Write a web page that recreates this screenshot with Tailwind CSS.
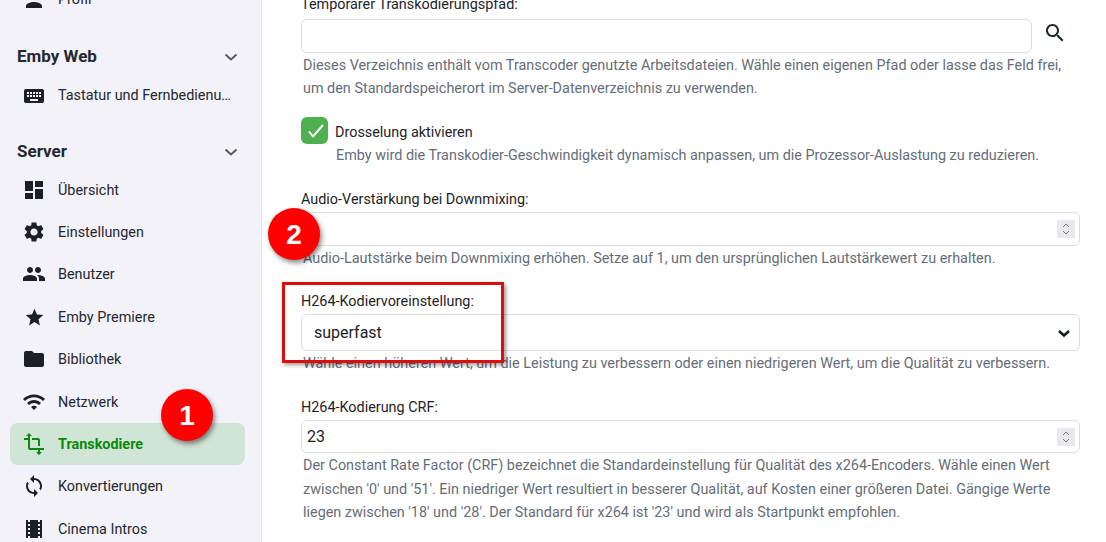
<!DOCTYPE html>
<html lang="de">
<head>
  <meta charset="UTF-8" />
  <meta name="viewport" content="width=device-width, initial-scale=1.0" />
  <title>Transkodierung</title>
  <script src="https://cdn.jsdelivr.net/npm/@tailwindcss/browser@4"></script>
</head>
<body class="bg-white font-['Roboto',sans-serif] text-[#1f2328]">
<div class="relative flex h-[542px] w-[1106px] overflow-hidden">

  <!-- sidebar -->
  <aside class="w-[262px] shrink-0 border-r border-[#e3e3e8] bg-[#f3f2f9] pl-[10px] pr-[16px] text-[14.4px] text-[#25282d]">
    <div class="-mt-[21px] flex h-[42px] items-center gap-[12px] pl-[12px]">
      <svg class="size-[24px] fill-[#1c1f24]" viewBox="0 0 24 24"><path d="M12 12c2.210 0 4-1.790 4-4s-1.790-4-4-4-4 1.790-4 4 1.790 4 4 4zm0 2c-2.670 0-8 1.340-8 4v2h16v-2c0-2.660-5.330-4-8-4z"/></svg>
      <span>Profil</span>
    </div>

    <div class="mt-[15px] flex h-[42px] items-center justify-between pl-[7px] pr-[4px]">
      <span class="text-[17px] font-bold">Emby Web</span>
      <svg class="size-[20px] fill-none stroke-[#555a61] stroke-2" viewBox="0 0 20 20"><path d="M4.500 7.500 10 12.500l5.500-5"/></svg>
    </div>
    <div class="-mt-[3px] flex h-[42px] items-center gap-[12px] pl-[12px] pr-[12px]">
      <svg class="size-[24px] shrink-0 fill-[#1c1f24]" viewBox="0 0 24 24"><path d="M20 5H4c-1.100 0-1.990.9-1.990 2L2 17c0 1.100.9 2 2 2h16c1.100 0 2-.9 2-2V7c0-1.100-.9-2-2-2zm-9 3h2v2h-2V8zm0 3h2v2h-2v-2zM8 8h2v2H8V8zm0 3h2v2H8v-2zm-1 2H5v-2h2v2zm0-3H5V8h2v2zm9 7H8v-2h8v2zm0-4h-2v-2h2v2zm0-3h-2V8h2v2zm3 3h-2v-2h2v2zm0-3h-2V8h2v2z"/></svg>
      <span class="truncate">Tastatur und Fernbedienung</span>
    </div>

    <div class="mt-[14px] flex h-[42px] items-center justify-between pl-[7px] pr-[4px]">
      <span class="text-[17px] font-bold">Server</span>
      <svg class="size-[20px] fill-none stroke-[#555a61] stroke-2" viewBox="0 0 20 20"><path d="M4.500 7.500 10 12.500l5.500-5"/></svg>
    </div>

    <nav class="-mt-[4px] [&_span]:mt-[2px]">
      <a class="flex h-[42px] items-center gap-[12px] pl-[12px]">
        <svg class="size-[24px] fill-[#1c1f24]" viewBox="0 0 24 24"><path d="M3 13h8V3H3v10zm0 8h8v-6H3v6zm10 0h8V11h-8v10zm0-18v6h8V3h-8z"/></svg>
        <span>Übersicht</span>
      </a>
      <a class="flex h-[42px] items-center gap-[12px] pl-[12px]">
        <svg class="size-[24px] fill-[#1c1f24]" viewBox="0 0 24 24"><path d="M19.140 12.940c.04-.3.06-.61.06-.94 0-.32-.02-.64-.07-.94l2.030-1.580c.18-.14.23-.41.12-.61l-1.920-3.320c-.12-.22-.37-.29-.59-.22l-2.390.96c-.5-.38-1.030-.7-1.620-.94l-.36-2.540c-.04-.24-.24-.41-.48-.41h-3.840c-.24 0-.43.17-.47.41l-.36 2.540c-.59.24-1.130.57-1.620.94l-2.390-.96c-.22-.08-.47 0-.59.22L2.740 8.870c-.12.21-.08.47.12.61l2.030 1.580c-.05.3-.09.63-.09.94s.02.64.07.94l-2.030 1.580c-.18.14-.23.41-.12.61l1.920 3.320c.12.22.37.29.59.22l2.390-.96c.5.38 1.030.7 1.620.94l.36 2.540c.05.24.24.41.48.41h3.840c.24 0 .44-.17.47-.41l.36-2.540c.59-.24 1.130-.56 1.620-.94l2.390.96c.22.08.47 0 .59-.22l1.920-3.320c.12-.22.07-.47-.12-.61l-2.010-1.580zM12 15.600c-1.980 0-3.600-1.620-3.600-3.600s1.620-3.600 3.600-3.600 3.600 1.620 3.600 3.600-1.620 3.600-3.600 3.600z"/></svg>
        <span>Einstellungen</span>
      </a>
      <a class="flex h-[42px] items-center gap-[12px] pl-[12px]">
        <svg class="size-[24px] fill-[#1c1f24]" viewBox="0 0 24 24"><path d="M16 11c1.660 0 2.990-1.340 2.990-3S17.660 5 16 5c-1.660 0-3 1.340-3 3s1.340 3 3 3zm-8 0c1.660 0 2.990-1.340 2.990-3S9.660 5 8 5C6.340 5 5 6.340 5 8s1.340 3 3 3zm0 2c-2.330 0-7 1.170-7 3.500V19h14v-2.500c0-2.330-4.670-3.500-7-3.500zm8 0c-.29 0-.62.02-.97.05 1.160.84 1.970 1.970 1.970 3.450V19h6v-2.500c0-2.330-4.670-3.500-7-3.500z"/></svg>
        <span>Benutzer</span>
      </a>
      <a class="mt-[1px] flex h-[42px] items-center gap-[12px] pl-[12px]">
        <svg class="mx-[1.500px] size-[21px] fill-[#1c1f24]" viewBox="0 0 24 24"><path d="M12 17.270L18.180 21l-1.640-7.030L22 9.240l-7.190-.61L12 2 9.190 8.630 2 9.240l5.460 4.730L5.820 21z"/></svg>
        <span>Emby Premiere</span>
      </a>
      <a class="flex h-[42px] items-center gap-[12px] pl-[12px]">
        <svg class="size-[24px] fill-[#1c1f24]" viewBox="0 0 24 24"><path d="M10 4H4c-1.100 0-1.990.9-1.990 2L2 18c0 1.100.9 2 2 2h16c1.100 0 2-.9 2-2V8c0-1.100-.9-2-2-2h-8l-2-2z"/></svg>
        <span>Bibliothek</span>
      </a>
      <a class="mt-[1px] flex h-[42px] items-center gap-[12px] pl-[12px]">
        <svg class="size-[24px] fill-[#1c1f24]" viewBox="0 0 24 24"><path d="M1 9l2 2c4.970-4.970 13.030-4.970 18 0l2-2C16.930 2.930 7.080 2.930 1 9zm8 8l3 3 3-3c-1.650-1.660-4.340-1.660-6 0zm-4-4l2 2c2.760-2.760 7.240-2.760 10 0l2-2C15.140 9.140 8.870 9.140 5 13z"/></svg>
        <span>Netzwerk</span>
      </a>
      <a class="flex h-[42px] items-center gap-[12px] rounded-lg bg-[#d1e5d6] pl-[12px] font-bold text-[#0a8a0a]">
        <svg class="size-[24px] fill-[#0a8a0a]" viewBox="0 0 24 24"><path d="M22 18v-2H8V4h2L7 1 4 4h2v2H2v2h4v8c0 1.100.9 2 2 2h8v2h-2l3 3 3-3h-2v-2h4zM10 8h6v6h2V8c0-1.100-.9-2-2-2h-6v2z"/></svg>
        <span>Transkodiere</span>
      </a>
      <a class="flex h-[42px] items-center gap-[12px] pl-[12px]">
        <svg class="size-[24px] fill-[#1c1f24]" viewBox="0 0 24 24"><path d="M12 4V1L8 5l4 4V6c3.310 0 6 2.690 6 6 0 1.010-.25 1.970-.7 2.800l1.460 1.460C19.540 15.030 20 13.570 20 12c0-4.420-3.580-8-8-8zm0 14c-3.310 0-6-2.690-6-6 0-1.010.25-1.970.7-2.800L5.240 7.740C4.460 8.970 4 10.430 4 12c0 4.420 3.580 8 8 8v3l4-4-4-4v3z"/></svg>
        <span>Konvertierungen</span>
      </a>
      <a class="mt-[1px] flex h-[42px] items-center gap-[12px] pl-[12px]">
        <svg class="size-[24px] fill-[#1c1f24]" viewBox="0 0 24 24"><path d="M18 3v2h-2V3H8v2H6V3H4v18h2v-2h2v2h8v-2h2v2h2V3h-2zM8 17H6v-2h2v2zm0-4H6v-2h2v2zm0-4H6V7h2v2zm10 8h-2v-2h2v2zm0-4h-2v-2h2v2zm0-4h-2V7h2v2z"/></svg>
        <span>Cinema Intros</span>
      </a>
    </nav>
  </aside>

  <!-- settings form -->
  <main class="flex-1 pl-[39px] text-[14.4px]">
    <label class="-mt-[4px] block h-[23px] leading-[18px]">Temporärer Transkodierungspfad:</label>
    <div class="flex items-start">
      <div class="h-[34px] w-[731px] rounded-md border border-[#dcdcdf]"></div>
      <svg class="ml-[11px] mt-[2px] size-[24px] fill-[#1c2530]" viewBox="0 0 24 24"><path d="M15.500 14h-.79l-.28-.27C15.410 12.590 16 11.110 16 9.500 16 5.910 13.090 3 9.500 3S3 5.910 3 9.500 5.910 16 9.500 16c1.610 0 3.090-.59 4.230-1.570l.27.28v.79l5 4.990L20.490 19l-4.990-5zm-6 0C7.010 14 5 11.990 5 9.500S7.010 5 9.500 5 14 7.010 14 9.500 11.990 14 9.500 14z"/></svg>
    </div>
    <p class="pl-[2px] pt-[1px] leading-[23px] text-[#666d78]">Dieses Verzeichnis enthält vom Transcoder genutzte Arbeitsdateien. Wähle einen eigenen Pfad oder lasse das Feld frei,<br />um den Standardspeicherort im Server-Datenverzeichnis zu verwenden.</p>

    <div class="mt-[17px] flex h-[27px] items-center gap-[7px]">
      <span class="flex size-[27px] items-center justify-center rounded-md bg-[#4fb04f]">
        <svg class="size-[22px] fill-none stroke-white stroke-2" viewBox="0 0 22 22"><path d="m5 11.500 4 5L19 5"/></svg>
      </span>
      <span class="mt-[4px]">Drosselung aktivieren</span>
    </div>
    <p class="mt-[1px] h-[22px] pl-[35px] leading-[22px] text-[#666d78]">Emby wird die Transkodier-Geschwindigkeit dynamisch anpassen, um die Prozessor-Auslastung zu reduzieren.</p>

    <label class="mt-[23px] block h-[22px] leading-[20px]">Audio-Verstärkung bei Downmixing:</label>
    <div class="flex h-[34px] w-[779px] items-center justify-end rounded-md border border-[#dcdcdf] pr-[4px]">
      <span class="flex h-[18px] w-[18px] flex-col items-center justify-center bg-[#e9e9ed]">
        <svg class="h-[14px] w-[10px] fill-none stroke-[#7a7a80]" viewBox="0 0 10 14"><path d="m2 5 3-3 3 3M2 9l3 3 3-3"/></svg>
      </span>
    </div>
    <p class="mt-[2px] h-[23px] pl-[2px] leading-[22px] text-[#666d78]">Audio-Lautstärke beim Downmixing erhöhen. Setze auf 1, um den ursprünglichen Lautstärkewert zu erhalten.</p>

    <label class="mt-[21px] block h-[22px] leading-[20px]">H264-Kodiervoreinstellung:</label>
    <div class="flex h-[37px] w-[779px] items-center justify-between rounded-md border border-[#dcdcdf] pl-[12px] pr-[9px] text-[16px]">
      <span>superfast</span>
      <svg class="size-[12px] fill-none stroke-[#141a22] stroke-[2.500]" viewBox="0 0 12 12"><path d="m1 4 5 4.500L11 4"/></svg>
    </div>
    <p class="mt-[2px] h-[23px] pl-[2px] leading-[22px] text-[#666d78]">Wähle einen höheren Wert, um die Leistung zu verbessern oder einen niedrigeren Wert, um die Qualität zu verbessern.</p>

    <label class="mt-[22px] block h-[22px] leading-[20px]">H264-Kodierung CRF:</label>
    <div class="flex h-[33px] w-[779px] items-center justify-between rounded-md border border-[#dcdcdf] pl-[5px] pr-[4px] text-[16px]">
      <span>23</span>
      <span class="flex h-[18px] w-[18px] flex-col items-center justify-center bg-[#e9e9ed]">
        <svg class="h-[14px] w-[10px] fill-none stroke-[#7a7a80]" viewBox="0 0 10 14"><path d="m2 5 3-3 3 3M2 9l3 3 3-3"/></svg>
      </span>
    </div>
    <p class="mt-[1px] w-[785px] pl-[2px] leading-[23.500px] text-[#666d78]">Der Constant Rate Factor (CRF) bezeichnet die Standardeinstellung für Qualität des x264-Encoders. Wähle einen Wert<br />zwischen '0' und '51'. Ein niedriger Wert resultiert in besserer Qualität, auf Kosten einer größeren Datei. Gängige Werte<br />liegen zwischen '18' und '28'. Der Standard für x264 ist '23' und wird als Startpunkt empfohlen.</p>
  </main>

  <!-- annotations -->
  <div class="absolute left-[282px] top-[282px] h-[81px] w-[222px] border-[3px] border-[#e00b0b] shadow-[2px_2px_4px_rgba(0,0,0,0.4)]"></div>
  <div class="absolute left-[268px] top-[208px] flex size-[52px] items-center justify-center rounded-full bg-[#fe0000] pt-[1px] font-['Liberation_Sans',sans-serif] text-[28px] font-bold text-white shadow-[2px_3px_5px_rgba(0,0,0,0.45)]">2</div>
  <div class="absolute left-[161px] top-[389px] flex size-[52px] items-center justify-center rounded-full bg-[#fe0000] pt-[1px] font-['Liberation_Sans',sans-serif] text-[28px] font-bold text-white shadow-[2px_3px_5px_rgba(0,0,0,0.45)]">1</div>
</div>
</body>
</html>
